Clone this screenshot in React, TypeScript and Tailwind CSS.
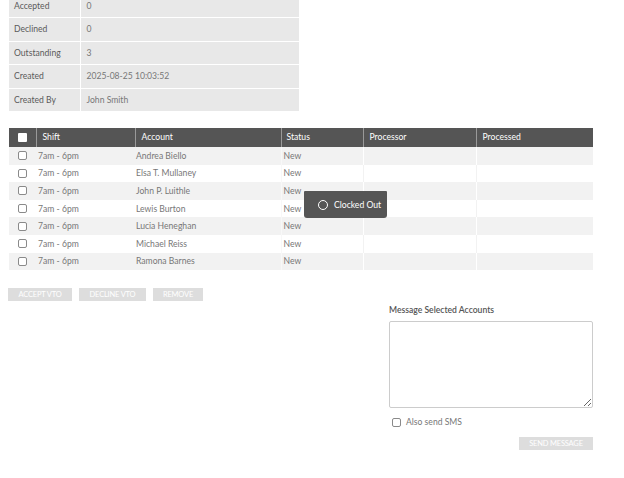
import React from 'react';

const summary = [
  { label: 'Accepted', value: '0' },
  { label: 'Declined', value: '0' },
  { label: 'Outstanding', value: '3' },
  { label: 'Created', value: '2025-08-25 10:03:52' },
  { label: 'Created By', value: 'John Smith' },
];

const rows = [
  'Andrea Biello',
  'Elsa T. Mullaney',
  'John P. Luithle',
  'Lewis Burton',
  'Lucia Heneghan',
  'Michael Reiss',
  'Ramona Barnes',
];

const Box: React.FC<{ filled?: boolean }> = ({ filled }) => (
  <span
    className={
      filled
        ? 'block w-[9px] h-[9px] bg-white rounded-[1px]'
        : 'block w-[9px] h-[9px] border border-[#8a8a8a] rounded-[2px] bg-white'
    }
  />
);

export default function App() {
  return (
    <div
      className="w-[624px] h-[478px] overflow-hidden bg-white text-[#777] text-[8.6px]"
      style={{ fontFamily: '"Lato", "Liberation Sans", sans-serif' }}
    >
      <div className="pl-[9px] -mt-[6px]">
        <table className="w-[290px] border-collapse">
          <tbody>
            {summary.map(s => (
              <tr key={s.label} className="h-[23.5px] bg-[#e8e8e8] border-b border-white">
                <td className="w-[71px] pl-[5px] pt-px text-[#5a5a5a] border-r border-white">{s.label}</td>
                <td className="pl-[6px] pt-px">{s.value}</td>
              </tr>
            ))}
          </tbody>
        </table>

        <div className="relative mt-[16px] w-[584px]">
          <table className="w-full border-collapse">
            <thead>
              <tr className="h-[19px] bg-[#555] text-white text-left">
                <th className="w-[27px] font-normal">
                  <div className="flex justify-center"><Box filled /></div>
                </th>
                <th className="w-[99px] pl-[6px] font-normal border-l border-[#999]">Shift</th>
                <th className="w-[146px] pl-[6px] font-normal border-l border-[#999]">Account</th>
                <th className="w-[82px] pl-[5px] font-normal border-l border-[#999]">Status</th>
                <th className="w-[113px] pl-[6px] font-normal border-l border-[#999]">Processor</th>
                <th className="pl-[6px] font-normal border-l border-[#999]">Processed</th>
              </tr>
            </thead>
            <tbody>
              {rows.map((name, i) => (
                <tr key={name} className={`h-[17.6px] ${i % 2 === 0 ? 'bg-[#f2f2f2]' : 'bg-white'}`}>
                  <td>
                    <div className="flex justify-center"><Box /></div>
                  </td>
                  <td className="pl-[2px] pt-px">7am - 6pm</td>
                  <td className="pl-[1px] pt-px">{name}</td>
                  <td className="pl-[2px] pt-px border-l border-[#f8f8f8]">New</td>
                  <td className={`border-l ${i % 2 === 0 ? 'border-white' : 'border-[#f2f2f2]'}`}></td>
                  <td className={`border-l ${i % 2 === 0 ? 'border-white' : 'border-[#f2f2f2]'}`}></td>
                </tr>
              ))}
            </tbody>
          </table>

          <div className="absolute left-[295px] top-[63px] w-[83px] h-[27px] bg-[#555] rounded-b-[3px] rounded-t-[1px] flex items-center pl-[14px] gap-[6px] text-white">
            <span className="block w-[10px] h-[10px] rounded-full border border-white" />
            <span className="pt-px">Clocked Out</span>
          </div>
        </div>

        <div className="mt-[18px] -ml-[1px] flex gap-[7px]">
          {[
            { t: 'ACCEPT VTO', w: 'w-[64px]' },
            { t: 'DECLINE VTO', w: 'w-[67px]' },
            { t: 'REMOVE', w: 'w-[50px]' },
          ].map(b => (
            <button
              key={b.t}
              className={`${b.w} h-[13px] bg-[#dddddd] text-white text-[7.5px] leading-[13px] tracking-tight`}
            >
              {b.t}
            </button>
          ))}
        </div>

        <div className="ml-[380px] mt-[3px] w-[204px] flex flex-col">
          <div className="text-[#555] font-semibold h-[12px] leading-[12px]">Message Selected Accounts</div>
          <textarea className="mt-[5px] h-[87px] w-full border border-[#ccc] rounded-[2px] resize-y bg-white" />
          <label className="mt-[10px] ml-[3px] flex items-center gap-[5px] h-[9px]">
            <Box />
            <span>Also send SMS</span>
          </label>
          <div className="mt-[10px] flex justify-end">
            <button className="h-[13px] w-[74px] bg-[#dddddd] text-white text-[7.5px] leading-[13px] tracking-tight">
              SEND MESSAGE
            </button>
          </div>
        </div>
      </div>
    </div>
  );
}
